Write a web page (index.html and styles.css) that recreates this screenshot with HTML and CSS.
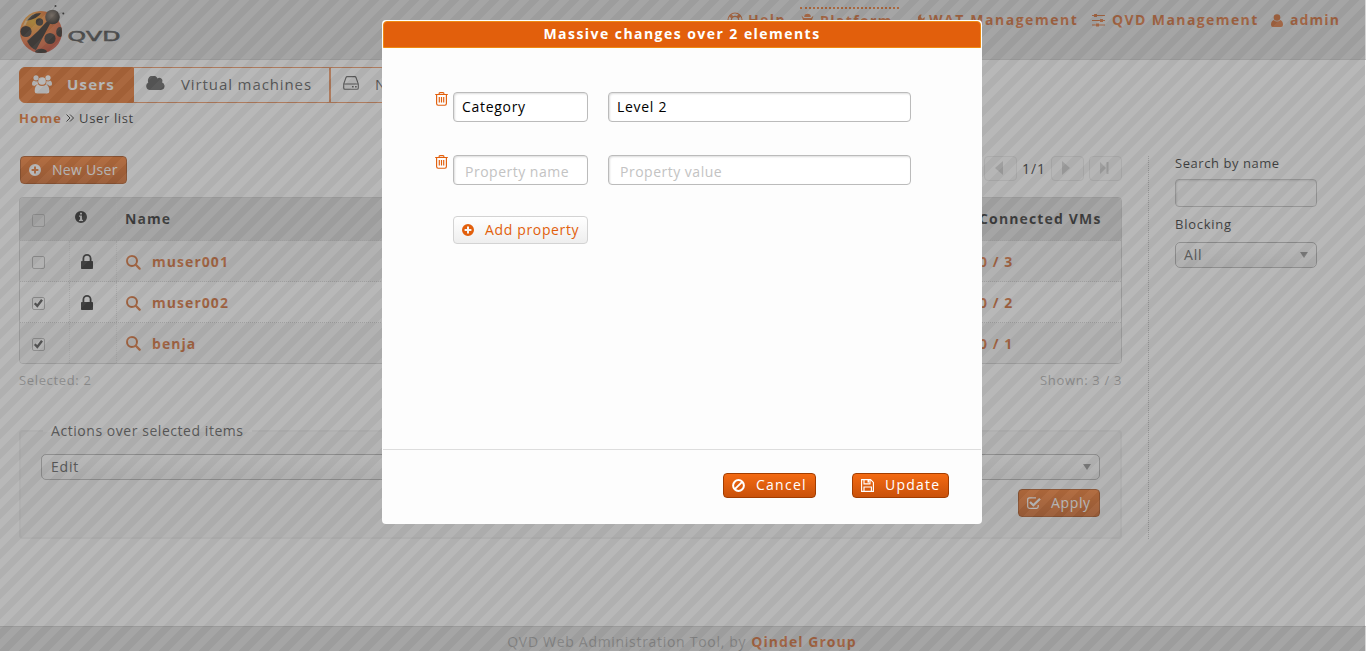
FILE: index.html
```html
<!DOCTYPE html>
<html lang="en">
<head>
<meta charset="utf-8">
<title>QVD Web Administration Tool</title>
<link rel="stylesheet" href="styles.css">
</head>
<body>
<svg width="0" height="0" class="defs">
  <symbol id="plus" viewBox="0 0 12 12"><path fill-rule="evenodd" fill="currentColor" d="M6 0a6 6 0 1 1 0 12A6 6 0 0 1 6 0zM5 2.600V5H2.600v2H5v2.400h2V7h2.400V5H7V2.600z"/></symbol>
  <symbol id="lock" viewBox="0 0 12 15"><path fill-rule="evenodd" fill="currentColor" d="M1.500 7V4.500a4.500 4.500 0 0 1 9 0V7h.7q.8 0 .8.8v6.400q0 .8-.8.8H.8q-.8 0-.8-.8V7.800Q0 7 .8 7zM3.300 7h5.400V4.500a2.700 2.700 0 0 0-5.400 0z"/></symbol>
  <symbol id="search" viewBox="0 0 15 15"><circle cx="6" cy="6" r="5" fill="none" stroke="currentColor" stroke-width="2"/><path d="M9.800 9.800L13.600 13.600" stroke="currentColor" stroke-width="2.300" stroke-linecap="round"/></symbol>
  <symbol id="trash" viewBox="0 0 13 14"><path d="M.2 2.500h12.600M4 2.200Q4 .6 5 .6h3Q9 .6 9 2.200M1.600 3v8.500q0 1.700 1.500 1.700h6.800q1.500 0 1.500-1.700V3M4.300 5v5.500M6.500 5v5.500M8.700 5v5.500" fill="none" stroke="currentColor" stroke-width="1.150"/></symbol>
  <symbol id="tick" viewBox="0 0 13 13"><path d="M2.800 6.300L5.300 9 10 2.800" fill="none" stroke="currentColor" stroke-width="2.400"/></symbol>
</svg>

<header class="header">
  <svg class="logo" width="105" height="52" viewBox="0 0 105 52">
    <defs>
      <radialGradient id="shell" cx=".3" cy=".25" r=".85"><stop offset="0" stop-color="#e8a818"/><stop offset=".4" stop-color="#ea6a1c"/><stop offset="1" stop-color="#b83020"/></radialGradient>
      <clipPath id="body"><circle cx="22" cy="28" r="21"/></clipPath>
      <radialGradient id="head" cx=".45" cy=".4" r=".6"><stop offset="0" stop-color="#7a6858"/><stop offset="1" stop-color="#14100c"/></radialGradient>
    </defs>
    <circle cx="22" cy="28" r="21" fill="url(#shell)"/>
    <g clip-path="url(#body)" fill="#1c140e">
      <path d="M8 37Q20 27 29 16l2 4Q24 33 17 46q-5-1-9-9z"/>
      <circle cx="7" cy="27.500" r="5.600"/><circle cx="20.500" cy="18" r="3.700"/><circle cx="31" cy="34.500" r="5.600"/>
      <path d="M7 17q4-8 15-8-2 5-15 8z"/><ellipse cx="41" cy="28" rx="3.800" ry="5"/><ellipse cx="22" cy="48" rx="6" ry="3.200"/>
    </g>
    <path d="M4 22Q7 12 17 9Q8 14 7 21z" fill="#f2d29b" opacity=".65"/>
    <circle cx="33.500" cy="13" r="7.300" fill="url(#head)"/>
    <path d="M34 6l2-4M39 10l4.500-1.500" stroke="#999" stroke-width=".6"/>
    <circle cx="36.500" cy="2" r="1" fill="#111"/><circle cx="44.300" cy="9.500" r="1" fill="#111"/>
    <text x="48.500" y="36.500" class="logo-text" textLength="53" lengthAdjust="spacingAndGlyphs">QVD</text>
  </svg>
  <nav class="topmenu">
    <a class="top-help"><svg width="16" height="16" viewBox="0 0 16 16"><circle cx="8" cy="8" r="7" fill="none" stroke="currentColor" stroke-width="1.200"/><circle cx="8" cy="8" r="3.600" fill="none" stroke="currentColor" stroke-width="1.200"/><path d="M3 3l2.500 2.500M13 3l-2.500 2.500M3 13l2.500-2.500M13 13l-2.500-2.500" stroke="currentColor" stroke-width="3"/></svg><span>Help</span></a>
    <a class="top-platform"><svg width="13" height="16" viewBox="0 0 13 16"><path d="M3.200 4a3.300 3.300 0 0 1 6.600 0zM.5 2.500L3 5h7l2.500-2.500L11 7h2v1.300h-2V11q0 4-4.500 4T2 11V8.300H0V7h2z" fill="currentColor"/></svg><span>Platform</span></a>
    <a class="top-wat"><svg width="12" height="15" viewBox="0 0 14 14"><path d="M10 0a4 4 0 0 0-4 5.500L.5 11a1.500 1.500 0 0 0 2.500 2.500L8.500 8A4 4 0 0 0 13.500 3L11 5 9 3z" fill="currentColor"/></svg><span>WAT Management</span></a>
    <a class="top-qvd"><svg width="13" height="14" viewBox="0 0 13 14"><path d="M0 2.500h13M0 7.500h13M0 12h13" stroke="currentColor" stroke-width="1.100"/><path d="M2 1h3v3H2zM8 6h3v3H8zM4 10.500h3v3H4z" fill="currentColor"/></svg><span>QVD Management</span></a>
    <a class="top-admin"><svg width="12" height="13" viewBox="0 0 12 13"><circle cx="6" cy="3.500" r="3.300" fill="currentColor"/><path d="M2.700 6Q6 9 9.300 6q2.700 1 2.700 4.800Q12 13 10 13H2q-2 0-2-2.200Q0 7 2.700 6z" fill="currentColor"/></svg><span>admin</span></a>
  </nav>
</header>

<nav class="tabs">
  <a class="tab tab-users"><svg width="20" height="19" viewBox="0 0 20 19"><g fill="currentColor"><circle cx="4" cy="2.800" r="2.600"/><circle cx="16" cy="2.800" r="2.600"/><circle cx="10" cy="6" r="3.800"/><path d="M2 5.500Q4 7 5.500 6q-.2 2 1 3.700Q4 9 3 10.800H2q-2 0-2-1.500 0-3.300 2-3.800zM18 5.500Q16 7 14.500 6q.2 2-1 3.700Q16 9 17 10.800h1q2 0 2-1.500 0-3.300-2-3.800zM6 9.500q4 3 8 0 3.300 1 3.300 6.500 0 2.500-2.500 2.500H5.200Q2.700 18.500 2.700 16 2.700 10.500 6 9.500z"/></g></svg><span>Users</span></a>
  <a class="tab tab-vms"><svg width="19" height="14" viewBox="0 0 19 14"><path d="M4 14a4 4 0 0 1-1.700-7.500A5 5 0 0 1 11.500 2.500a3 3 0 0 1 4.500 3.800A4 4 0 0 1 15 14z" fill="currentColor"/></svg><span>Virtual machines</span></a>
  <a class="tab tab-nodes"><svg width="16" height="14" viewBox="0 0 16 14"><path d="M.7 8L3 1.500Q3.300.6 4.200.6h7.600q.9 0 1.200.9L15.300 8v4q0 1.300-1.300 1.300H2Q.7 13.300.7 12zM.7 8h14.600" fill="none" stroke="currentColor" stroke-width="1.100"/><path d="M9 10h1.700v1.500H9zM12 10h1.700v1.500H12z" fill="currentColor"/></svg><span>Nodes</span></a>
</nav>
<div class="crumbs"><b>Home</b><svg width="8" height="8" viewBox="0 0 8 8"><path d="M.5.500L4 4 .5 7.500M4 .5L7.500 4 4 7.500" fill="none" stroke="currentColor"/></svg><span>User list</span></div>

<div class="content">
  <main class="main">
    <div class="toolbar">
      <a class="btn btn-new"><svg width="12" height="12"><use href="#plus"/></svg><span>New User</span></a>
      <div class="pager">
        <i class="page"><svg width="8" height="14" viewBox="0 0 8 14"><path d="M8 0v14L0 7z" fill="currentColor"/></svg></i>
        <span>1/1</span>
        <i class="page"><svg width="8" height="14" viewBox="0 0 8 14"><path d="M0 0v14l8-7z" fill="currentColor"/></svg></i>
        <i class="page last"><svg width="9" height="12" viewBox="0 0 9 12"><path d="M0 0v12l6-6zM6.500 0h2v12h-2z" fill="currentColor"/></svg></i>
      </div>
    </div>
    <div class="table">
      <div class="row head"><div class="cell c1"><i class="check"></i></div><div class="cell c2"><svg width="12" height="12" viewBox="0 0 12 12"><path fill-rule="evenodd" fill="currentColor" d="M6 0a6 6 0 1 1 0 12A6 6 0 0 1 6 0zM5 1.700v1.700h2V1.700zM4 4.500v1.200h1v3H4V10h4V8.700H7V4.500z"/></svg></div><div class="cell c3">Name</div><div class="cell c4">Connected VMs</div></div>
      <div class="row odd"><div class="cell c1"><i class="check"></i></div><div class="cell c2"><svg width="12" height="15"><use href="#lock"/></svg></div><div class="cell c3"><svg width="15" height="15"><use href="#search"/></svg>muser001</div><div class="cell c4">0 / 3</div></div>
      <div class="row even"><div class="cell c1"><i class="check"><svg width="13" height="13"><use href="#tick"/></svg></i></div><div class="cell c2"><svg width="12" height="15"><use href="#lock"/></svg></div><div class="cell c3"><svg width="15" height="15"><use href="#search"/></svg>muser002</div><div class="cell c4">0 / 2</div></div>
      <div class="row odd"><div class="cell c1"><i class="check"><svg width="13" height="13"><use href="#tick"/></svg></i></div><div class="cell c2"></div><div class="cell c3"><svg width="15" height="15"><use href="#search"/></svg>benja</div><div class="cell c4">0 / 1</div></div>
    </div>
    <div class="counts"><span>Selected: 2</span><span>Shown: 3 / 3</span></div>
    <fieldset class="actions">
      <legend>Actions over selected items</legend>
      <div class="select select-action"><span>Edit</span><i class="caret"></i></div>
      <a class="btn btn-apply"><svg width="14" height="12" viewBox="0 0 14 12"><path d="M9 .8H2.500Q.7.800.7 2.500v7Q.7 11.300 2.500 11.300h7q1.700 0 1.700-1.800V8" fill="none" stroke="currentColor" stroke-width="1.200"/><path d="M3 5l3.300 3.300L13 1.700" fill="none" stroke="currentColor" stroke-width="2.200"/></svg><span>Apply</span></a>
    </fieldset>
  </main>
  <aside class="filters">
    <label>Search by name</label>
    <div class="field"></div>
    <label class="blocking">Blocking</label>
    <div class="select"><span>All</span><i class="caret"></i></div>
  </aside>
</div>
<footer class="footer"><span>QVD Web Administration Tool, by</span><b>Qindel Group</b></footer>

<div class="overlay"></div>
<section class="dialog">
  <h1>Massive changes over 2 elements</h1>
  <div class="dialog-body">
    <div class="prop"><svg width="13" height="14"><use href="#trash"/></svg><div class="field name">Category</div><div class="field value">Level 2</div></div>
    <div class="prop empty"><svg width="13" height="14"><use href="#trash"/></svg><div class="field name">Property name</div><div class="field value">Property value</div></div>
    <a class="btn btn-add"><svg width="12" height="12"><use href="#plus"/></svg><span>Add property</span></a>
  </div>
  <div class="dialog-foot">
    <a class="btn btn-cancel"><svg width="13" height="13" viewBox="0 0 13 13"><circle cx="6.500" cy="6.500" r="5.400" fill="none" stroke="currentColor" stroke-width="2"/><path d="M2.800 10.200l7.400-7.400" stroke="currentColor" stroke-width="1.900"/></svg><span>Cancel</span></a>
    <a class="btn btn-update"><svg width="13" height="13" viewBox="0 0 13 13"><path d="M.6.600h9l2.800 2.800v9H.6zM3 .6v4.200h6V.6M3 12.400V8h7.400v4.400" fill="none" stroke="currentColor" stroke-width="1.150"/><path d="M6.500.600h1.700v3H6.500z" fill="currentColor"/></svg><span>Update</span></a>
  </div>
</section>
</body>
</html>
```

FILE: styles.css
```css
* { box-sizing: border-box; }
html, body { margin: 0; height: 651px; overflow: hidden; }
body { display: flex; flex-direction: column; font: 14px/20px "Open Sans", "Noto Sans", sans-serif; letter-spacing: 1px; color: #111; background: #fff; }
svg { flex: none; display: block; }
span, b, a { white-space: nowrap; }
.defs { position: absolute; }

.header { height: 60px; flex: none; display: flex; justify-content: space-between; background: #d9d9d9; border-bottom: 1px solid #c8c8c8; color: #d05a18; }
.logo { margin: 4px 0 0 19px; }
.logo-text { font: 13.5px "DejaVu Sans", sans-serif; fill: #333; stroke: #333; stroke-width: .5px; letter-spacing: 0; }
.topmenu { display: flex; padding-top: 7px; font-weight: bold; letter-spacing: 1.400px; }
.topmenu a { display: flex; flex: none; align-items: center; height: 25px; }
.topmenu svg { margin-top: 1px; }
.top-help { width: 73px; gap: 5px; }
.top-platform { width: 99px; margin-right: 14px; border-top: 2px dotted #e25f0c; gap: 6px; padding-left: 1px; }
.top-wat { width: 179px; gap: 4px; letter-spacing: 1.550px; }
.top-qvd { width: 179px; gap: 7px; }
.top-admin { width: 95px; gap: 7px; letter-spacing: 1.100px; }

.tabs { display: flex; flex: none; margin: 7px 0 0 19px; height: 36px; font-size: 15px; color: #444; letter-spacing: .9px; }
.tab { display: flex; align-items: center; border: 1px solid #e8854a; padding-bottom: 2px; }
.tab-users { width: 115px; padding-left: 12px; gap: 15px; border-color: #e25f0c; background: #e25f0c; color: #fff; font-weight: bold; border-radius: 6px 0 0 6px; letter-spacing: 1.200px; }
.tab-vms { width: 197px; padding-left: 12px; gap: 16px; border-left: 0; border-right-width: 2px; }
.tab-vms svg { margin-top: -3px; }
.tab-nodes { width: 125px; padding-left: 12px; gap: 16px; border-left: 0; }
.tab-nodes svg { margin-top: -2px; }
.crumbs { display: flex; flex: none; align-items: center; height: 20px; margin: 5px 0 0 19px; font-size: 13px; letter-spacing: .65px; }
.crumbs b { color: #e25f0c; width: 47px; letter-spacing: 1.200px; }
.crumbs span { margin-left: 5px; }

.content { display: flex; flex: none; margin: 28px 0 0 19px; height: 383px; }
.main { width: 1130px; padding-right: 26px; border-right: 1px dotted #bbb; }
.toolbar { display: flex; justify-content: space-between; padding-left: 1px; height: 41px; }
.btn { display: flex; align-items: center; height: 28px; border: 1px solid #a33d00; border-radius: 4px; padding-left: 8px; gap: 11px; color: #fff; background: linear-gradient(#f46a12, #c9510a); letter-spacing: .65px; }
.btn-new { width: 107px; letter-spacing: .3px; }
.pager { display: flex; letter-spacing: 1px; }
.pager span { width: 34px; text-align: center; line-height: 26px; }
.page { display: flex; align-items: center; justify-content: center; width: 33px; height: 25px; border: 1px solid #e6e6e6; border-radius: 4px; color: #ccc; background: #fafafa; }
.last { margin-left: 5px; }
.page svg { margin: -1px 4px 0 0; }
.last svg { margin-right: 3px; }
.table { height: 167px; border: 1px solid #ccc; border-radius: 4px; overflow: hidden; font-weight: bold; letter-spacing: 1.050px; }
.row { display: flex; height: 41px; border-bottom: 1px dotted #ccc; }
.row:last-child { border-bottom: 0; height: 40px; }
.head { height: 43px; background: #d9d9d9; }
.odd { background: #f2f2f2; }
.cell { display: flex; align-items: center; color: #d05a18; padding-top: 2px; }
.row:last-child .cell { padding-top: 1px; }
.head .cell { color: #111; padding-bottom: 1px; padding-top: 0; }
.c1 { width: 50px; padding-left: 12px; border-right: 1px dotted #ddd; }
.row .c1, .row:last-child .c1 { padding-top: 3px; }
.row.head .c1 { padding-top: 3px; }
.c2 { width: 47px; padding-left: 11px; border-right: 1px dotted #ddd; }
.row .c2 { color: #111; padding-top: 0; }
.head .c2 { padding: 0 0 5px 5px; }
.row.head .c2 { padding-bottom: 5px; }
.c3 { width: 862px; padding-left: 8px; gap: 11px; }
.cell.c3 svg { margin-left: 1px; }
.c4 { width: 142px; }
.head .c4 { letter-spacing: 1.150px; }
.check { width: 13px; height: 13px; border: 1px solid #aaa; border-radius: 2px; color: #333; }
.check svg { margin: -1px; }
.counts { display: flex; justify-content: space-between; margin-top: 6px; font-size: 13px; line-height: 20px; color: #aaa; letter-spacing: .65px; }
.actions { position: relative; margin: 40px 0 0; padding: 24px 20px 0; height: 109px; border: 2px solid #eee; border-radius: 4px; background: #f7f7f7; color: #444; }
.actions legend { position: absolute; left: 22px; top: -11px; height: 22px; padding: 0 8px; letter-spacing: .55px; background: linear-gradient(#fff 50%, #f7f7f7 50%); }
.select { display: flex; align-items: center; justify-content: space-between; height: 26px; padding: 0 9px; border: 1px solid #aaa; border-radius: 5px; background: linear-gradient(#fff, #eee); color: #444; letter-spacing: .8px; }
.select-action { margin-top: -2px; padding-right: 8px; }
.caret { border: 4px solid transparent; border-top: 6px solid #888; border-bottom: 0; }
.btn-apply { width: 82px; margin: 9px 0 0 auto; gap: 10px; }
.filters { width: 168px; padding-left: 26px; font-size: 13px; letter-spacing: .55px; }
.filters label { display: block; height: 23px; line-height: 15px; }
.filters .blocking { letter-spacing: .75px; }
.filters .field { height: 28px; margin-bottom: 10px; }
.filters .select { margin-top: 2px; padding: 0 8px; font-size: 14px; }
.field { border: 1px solid #bbb; border-radius: 4px; background: #fff; box-shadow: inset 1px 1px 2px #ddd; }
.footer { display: flex; flex: none; justify-content: center; gap: 5px; margin: 87px 0 0; height: 30px; padding: 5px 2px 0 0; border-top: 1px solid #c4c4c4; background: #d9d9d9; color: #999; letter-spacing: .7px; }
.footer b { color: #d05a18; letter-spacing: 1.050px; }

.overlay { position: fixed; inset: 0 1px 0 0; opacity: .5; background: linear-gradient(135deg, #727272 25%, #616161 25% 50%, #727272 50% 75%, #616161 75%) 0 0 / 20px 20px; }
.dialog { position: fixed; left: 382px; top: 20px; width: 600px; height: 504px; padding: 1px; border-radius: 4px; background: #fdfdfd; }
.dialog h1 { height: 27px; margin: 0; border: 1px solid #ee8a12; border-radius: 4px 4px 0 0; background: #e25f0c; color: #fff; font-size: 14px; line-height: 24px; text-align: center; letter-spacing: 1.450px; }
.dialog-body { height: 401px; padding: 44px 0 0 51px; }
.prop { display: flex; align-items: flex-start; height: 63px; }
.prop svg { color: #e25f0c; margin: 0 5px 0 1px; }
.prop .field { height: 30px; padding-left: 8px; line-height: 28px; color: #000; letter-spacing: .7px; }
.prop .name { width: 135px; margin-right: 20px; }
.prop .value { width: 303px; }
.prop.empty .field { color: #c3c3c3; padding-left: 11px; line-height: 32px; letter-spacing: .5px; }
.btn-add { width: 135px; margin: -2px 0 0 19px; color: #e25f0c; border-color: #d3d3d3; background: linear-gradient(#fff, #eee); }
.dialog-foot { display: flex; justify-content: flex-end; gap: 36px; padding: 23px 32px 0 0; border-top: 1px solid #ddd; }
.dialog-foot .btn { height: 25px; padding-bottom: 1px; letter-spacing: 1.250px; }
.btn-cancel { width: 93px; }
.btn-update { width: 97px; }
```
